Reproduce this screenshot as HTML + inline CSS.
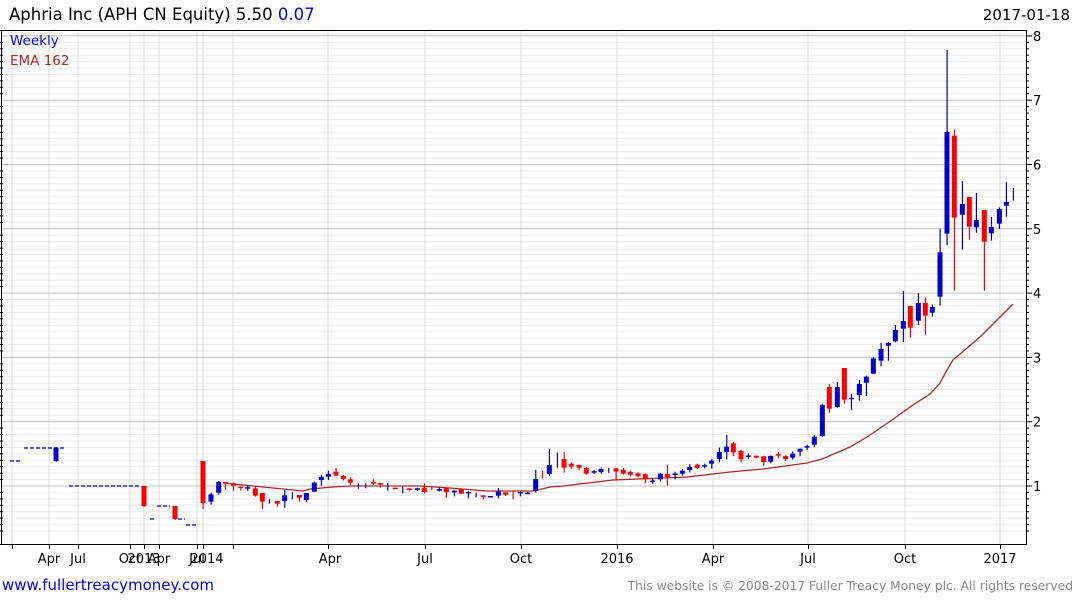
<!DOCTYPE html>
<html><head><meta charset="utf-8"><style>
html,body{margin:0;padding:0;background:#fff;width:1075px;height:600px;overflow:hidden}
svg{display:block;font-family:"DejaVu Sans","Liberation Sans",sans-serif}
</style></head><body>
<svg id="c" width="1075" height="600" xmlns="http://www.w3.org/2000/svg">
<text x="9" y="20" font-size="16.5" fill="#000">Aphria Inc (APH CN Equity) 5.50 <tspan fill="#0000ff">0.07</tspan></text>
<text x="1070" y="20" font-size="15" fill="#000" text-anchor="end">2017-01-18</text>
<text x="2" y="590" font-size="15" fill="#0000ff">www.fullertreacymoney.com</text>
<text x="1073" y="590" font-size="12.3" fill="#888" text-anchor="end">This website is © 2008-2017 Fuller Treacy Money plc. All rights reserved</text>
</svg>
<script>
const s=document.getElementById('c');const NS='http://www.w3.org/2000/svg';
function el(t,a,txt){const e=document.createElementNS(NS,t);for(const k in a)e.setAttribute(k,a[k]);if(txt!=null)e.textContent=txt;s.appendChild(e);return e;}
const Y=p=>486-(p-1)*64.3;
for(let i=3;i<=81;i++){const p=i/10;if(i%10==0)continue;const y=Y(p);if(y<31||y>543)continue;el('line',{x1:2,x2:1026,y1:y,y2:y,stroke:'#ebebeb','stroke-width':1});}
const vx=[12,49,78,130,144,159,197,203,233,328,425,521,617,713,808,905,1000];
vx.forEach(x=>el('line',{x1:x,x2:x,y1:31,y2:544,stroke:'#dcdcdc','stroke-width':1}));
for(let p=1;p<=8;p++){const y=Y(p);el('line',{x1:2,x2:1026,y1:y,y2:y,stroke:'#c0c0c0','stroke-width':1});
el('text',{x:1033,y:y+5,'font-size':13,fill:'#000'},String(p));
el('line',{x1:1026,x2:1032,y1:y,y2:y,stroke:'#000'});}
for(let i=3;i<=81;i++){const y=Y(i/10);if(y<31||y>543||i%10==0)continue;el('line',{x1:1026,x2:1029,y1:y,y2:y,stroke:'#000'});el('line',{x1:0,x2:3,y1:y,y2:y,stroke:'#000'});}
el('line',{x1:0,x2:1026,y1:30.5,y2:30.5,stroke:'#000'});
el('line',{x1:1026.5,x2:1026.5,y1:30,y2:544,stroke:'#000'});
el('line',{x1:1.5,x2:1.5,y1:30,y2:544,stroke:'#000'});
el('line',{x1:0,x2:1027,y1:544.5,y2:544.5,stroke:'#000'});
vx.forEach(x=>el('line',{x1:x+.5,x2:x+.5,y1:544,y2:549,stroke:'#000'}));
[[49,'Apr'],[78,'Jul'],[130,'Oct'],[144,'2013'],[159,'Apr'],[197,'Jul'],[207,'2014'],[330,'Apr'],[425,'Jul'],[521,'Oct'],[617,'2016'],[713,'Apr'],[808,'Jul'],[905,'Oct'],[1000,'2017']].forEach(([x,t])=>el('text',{x:x,y:563,'font-size':13,fill:'#000','text-anchor':'middle'},t));
el('text',{x:10,y:45,'font-size':13.5,fill:'#0000ff'},'Weekly');
el('text',{x:10,y:65,'font-size':13.5,fill:'#a52a2a'},'EMA 162');
const ema=[[223,483],[243,485],[273,488],[303,491],[310,489],[333,487],[350,486],[420,486],[450,488],[487,491],[533,491],[550,487],[563,486],[613,480],[687,477],[730,472],[763,469],[807,463],[822,459],[850,447],[867,437],[892,420],[910,407],[930,394],[940,383],[947,370],[953,360],[980,337],[1000,317],[1013,304]];
el('polyline',{points:ema.map(p=>p.join(',')).join(' '),fill:'none',stroke:'#a52a2a','stroke-width':1.3});
const B='#0000cc',R='#ff0000';
function dash(x1,x2,y,c){el('line',{x1,x2,y1:y,y2:y,stroke:c||B,'stroke-width':1.2,'stroke-dasharray':'4,2'});}
dash(10,22,461);dash(24,65,448);dash(69,140,486);dash(150,155,519);dash(157,170,506);dash(178,185,519);dash(186,198,525);
function cd(x,wt,wb,bt,bb,c){el('rect',{x:x-0.5,y:wt,width:1.2,height:Math.max(1,wb-wt),fill:c});
 if(bt!=null){el('rect',{x:x-2.5,y:bt,width:5,height:Math.max(1.5,bb-bt),fill:c});}}
function cross(x,y,wt,wb,c){el('rect',{x:x-0.5,y:wt,width:1.2,height:wb-wt,fill:c});el('rect',{x:x-2.5,y:y-0.5,width:5,height:1.5,fill:c});}
cd(56,447,462,448,461,B);cd(144,486,507,486,506,R);cd(175,506,520,506,519,R);
cd(203,461,509,461,503,R);
const z4=[[63,218,254,223,245,B],[86,183,224,186,218,B],[106,186,209,186,189,R],[130,188,213,190,197,R],[152,200,212,200,203,R],[173,197,212,null,null,B,203],[196,200,230,205,227,R],[217,219,267,219,245,R],[238,237,251,null,null,B],[262,243,260,243,251,R],[284,210,263,226,243,B],[307,216,238,null,null,B],[328,225,245,225,233,R],[349,219,246,219,240,B],[373,185,215,188,215,B],[394,165,197,171,180,B],[415,152,180,162,170,B],[438,144,167,155,167,R],[460,165,182,168,177,R],[481,172,195,178,188,R],[505,190,206,null,null,B],[527,190,205,null,null,B],[550,178,195,null,null,R,188],[571,189,203,189,194,R],[593,189,212,null,null,B],[616,203,207,203,206,R],[638,200,220,null,null,B],[658,205,212,205,210,R],[682,203,213,205,210,B],[703,190,220,203,216,R],[725,200,210,null,null,R],[748,203,215,207,212,B],[769,203,233,203,217,R],[793,210,229,212,217,B],[814,207,222,207,221,R],[835,214,235,216,220,B],[858,218,232,null,null,B],[880,226,238,226,230,R],[901,228,230,228,230,B],[925,204,235,215,227,B],[947,217,228,217,224,R],[969,215,238,null,null,R],[991,214,229,216,220,B],[1013,216,222,218,220,B],[1037,150,217,177,213,B],[1057,153,175,null,null,R]];
function plot(arr,ox,oy){arr.forEach(a=>{const x=ox+a[0]/3,wt=oy+a[1]/3,wb=oy+a[2]/3;
 if(a[6]!=null){cross(x,oy+a[6]/3,wt,wb,a[5]);}
 else cd(x,wt,wb,a[3]==null?null:oy+a[3]/3,a[4]==null?null:oy+a[4]/3,a[5]);});}
plot(z4,190,420);
const z5=[[58,87,168,135,162,B],[82,98,143,null,null,B],[102,96,158,117,143,R],[124,128,147,131,140,R],[147,135,151,135,143,R],[169,141,164,144,161,R],[192,150,162,null,null,B,155],[213,143,161,147,156,B],[236,144,159,null,null,B],[258,145,182,145,155,R],[280,144,164,149,161,R],[301,153,169,156,164,R],[324,157,172,160,169,R],[346,160,190,163,178,R],[368,175,192,null,null,B,183],[391,158,185,161,178,B],[412,135,197,162,171,R],[435,155,178,null,null,B,162],[457,147,167,152,161,B],[479,132,157,141,150,B],[502,131,148,134,144,R],[524,131,145,null,null,B,137],[545,118,146,122,131,B],[568,83,127,96,117,B],[590,45,118,80,96,B],[610,66,109,70,97,R],[633,90,127,93,118,R],[655,100,118,null,null,B,108],[679,107,115,107,113,R],[701,107,137,109,126,R],[722,106,130,108,125,B],[745,96,115,null,null,R,104],[767,106,123,108,117,R],[788,94,119,101,113,B],[810,86,109,86,95,B],[831,74,90,null,null,B,80],[853,45,82,50,74,B]];
plot(z5,530,420);
const z6=[[67,372,470,375,468,B],[88,312,398,321,386,R],[112,306,383,321,381,B],[133,264,371,264,359,R],[154,341,390,null,null,B,355],[178,300,362,312,345,B],[199,287,348,290,308,B],[220,231,282,235,281,B],[243,189,259,207,242,B],[265,186,242,189,197,B],[286,135,187,150,184,B],[310,33,186,123,146,B],[331,78,173,78,143,R],[355,39,135,69,122,B],[376,53,164,69,107,R],[397,73,110,81,98,B]];
plot(z6,800,280);
const z3=[[420,627,857,697,830,B],[441,90,676,336,641,B],[463,329,812,347,593,R],[487,483,689,552,584,B],[508,531,659,531,620,R],[529,519,638,600,622,B],[553,570,812,570,665,R],[574,591,662,621,640,B],[598,562,627,567,611,B],[619,486,590,546,557,B],[640,504,542,null,null,B]];
plot(z3,800,20);
</script>
</body></html>
